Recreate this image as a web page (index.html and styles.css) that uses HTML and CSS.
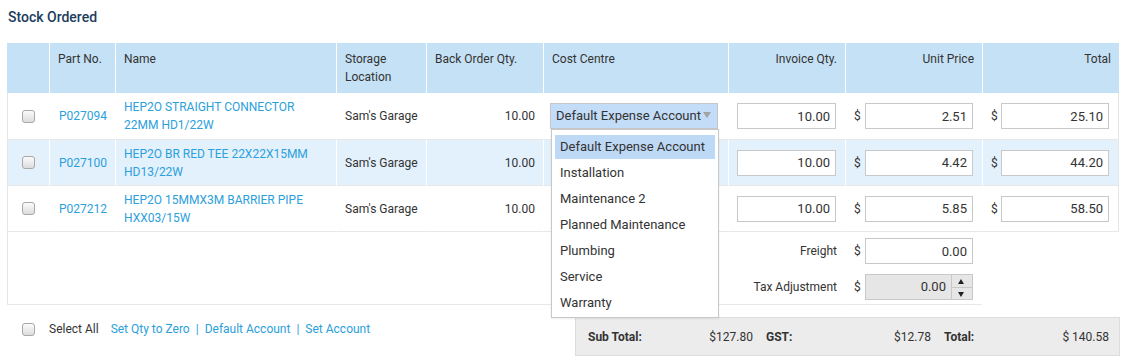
FILE: index.html
```html
<!DOCTYPE html>
<html lang="en">
<head>
    <meta charset="UTF-8">
    <meta name="viewport" content="width=device-width, initial-scale=1.0">
    <title>Stock Ordered</title>
    <link rel="stylesheet" href="styles.css">
</head>
<body>
    <div class="page">
        <h2 class="section-title">Stock Ordered</h2>

        <table class="stock-table">
            <colgroup>
                <col style="width:42px">
                <col style="width:66px">
                <col style="width:221px">
                <col style="width:90px">
                <col style="width:117px">
                <col style="width:185px">
                <col style="width:117px">
                <col style="width:137px">
                <col style="width:137px">
            </colgroup>
            <thead>
                <tr>
                    <th></th>
                    <th>Part No.</th>
                    <th>Name</th>
                    <th>Storage Location</th>
                    <th>Back Order Qty.</th>
                    <th>Cost Centre</th>
                    <th class="right">Invoice Qty.</th>
                    <th class="right">Unit Price</th>
                    <th class="right">Total</th>
                </tr>
            </thead>
            <tbody>
                <tr class="row-first">
                    <td class="check-cell"><input type="checkbox" class="check"></td>
                    <td class="part-cell"><a href="#">P027094</a></td>
                    <td class="name-cell"><a href="#">HEP2O STRAIGHT CONNECTOR 22MM HD1/22W</a></td>
                    <td>Sam's Garage</td>
                    <td class="num">10.00</td>
                    <td class="cost-cell">
                        <div class="cc-select">
                            Default Expense Account
                            <ul class="cc-list">
                                <li class="active">Default Expense Account</li>
                                <li>Installation</li>
                                <li>Maintenance 2</li>
                                <li>Planned Maintenance</li>
                                <li>Plumbing</li>
                                <li>Service</li>
                                <li>Warranty</li>
                            </ul>
                        </div>
                    </td>
                    <td class="qty-cell"><input class="num-input" type="text" value="10.00"></td>
                    <td class="money-cell"><div class="money"><span>$</span><input class="num-input" type="text" value="2.51"></div></td>
                    <td class="total-cell"><div class="money"><span>$</span><input class="num-input" type="text" value="25.10"></div></td>
                </tr>
                <tr class="alt">
                    <td class="check-cell"><input type="checkbox" class="check"></td>
                    <td class="part-cell"><a href="#">P027100</a></td>
                    <td class="name-cell"><a href="#">HEP2O BR RED TEE 22X22X15MM HD13/22W</a></td>
                    <td>Sam's Garage</td>
                    <td class="num">10.00</td>
                    <td class="cost-cell"></td>
                    <td class="qty-cell"><input class="num-input" type="text" value="10.00"></td>
                    <td class="money-cell"><div class="money"><span>$</span><input class="num-input" type="text" value="4.42"></div></td>
                    <td class="total-cell"><div class="money"><span>$</span><input class="num-input" type="text" value="44.20"></div></td>
                </tr>
                <tr>
                    <td class="check-cell"><input type="checkbox" class="check"></td>
                    <td class="part-cell"><a href="#">P027212</a></td>
                    <td class="name-cell"><a href="#">HEP2O 15MMX3M BARRIER PIPE HXX03/15W</a></td>
                    <td>Sam's Garage</td>
                    <td class="num">10.00</td>
                    <td class="cost-cell"></td>
                    <td class="qty-cell"><input class="num-input" type="text" value="10.00"></td>
                    <td class="money-cell"><div class="money"><span>$</span><input class="num-input" type="text" value="5.85"></div></td>
                    <td class="total-cell"><div class="money"><span>$</span><input class="num-input" type="text" value="58.50"></div></td>
                </tr>
                <tr class="extra-row freight-row">
                    <td colspan="7" class="extra-label">Freight</td>
                    <td class="money-cell"><div class="money"><span>$</span><input class="num-input" type="text" value="0.00"></div></td>
                    <td class="blank"></td>
                </tr>
                <tr class="extra-row tax-row">
                    <td colspan="7" class="extra-label">Tax Adjustment</td>
                    <td class="money-cell">
                        <div class="money">
                            <span>$</span>
                            <div class="spin-input">
                                <span class="spin-value">0.00</span>
                                <span class="spin">
                                    <span class="spin-up"></span>
                                    <span class="spin-down"></span>
                                </span>
                            </div>
                        </div>
                    </td>
                    <td class="blank"></td>
                </tr>
            </tbody>
        </table>

        <div class="footer">
            <div class="bulk-actions">
                <input type="checkbox" class="check">
                <span class="select-all">Select All</span>
                <a href="#">Set Qty to Zero</a>
                <span class="sep">|</span>
                <a href="#">Default Account</a>
                <span class="sep">|</span>
                <a href="#">Set Account</a>
            </div>
            <div class="totals-box">
                <div class="total-group"><b>Sub Total:</b><span>$127.80</span></div>
                <div class="total-group"><b>GST:</b><span>$12.78</span></div>
                <div class="total-group"><b>Total:</b><span>$ 140.58</span></div>
            </div>
        </div>
    </div>
</body>
</html>
```

FILE: styles.css
```css
* {
    box-sizing: border-box;
}

body {
    margin: 0;
    background: #fff;
    color: #333;
    font-family: Roboto, "Liberation Sans", Arial, sans-serif;
    font-size: 12px;
}

a {
    color: #2ba0dc;
    text-decoration: none;
}

.page {
    padding: 7px 7px 0 7px;
}

.section-title {
    margin: 0 0 16px 1px;
    font-size: 14px;
    font-weight: 500;
    line-height: 20px;
    color: #1d3d60;
}

/* table */
.stock-table {
    width: 1112px;
    border-collapse: separate;
    border-spacing: 0;
    table-layout: fixed;
}

.stock-table th {
    height: 50px;
    padding: 7px 8px 0;
    background: #c5e1f5;
    border-left: 1px solid #fff;
    font-weight: normal;
    line-height: 18px;
    text-align: left;
    vertical-align: top;
}

.stock-table th:first-child {
    border-left-color: #c5e1f5;
}

.stock-table th.right {
    text-align: right;
}

.stock-table td {
    padding: 0 8px;
    border-left: 1px solid #fff;
    border-bottom: 1px solid #e8e8e8;
    line-height: 18px;
    vertical-align: middle;
}

.stock-table td:first-child {
    border-left-color: #e5e5e5;
}

.stock-table td:last-child {
    border-right: 1px solid #e5e5e5;
}

.stock-table tbody tr {
    height: 46px;
}

.stock-table tbody tr.row-first {
    height: 47px;
}

.stock-table tr.alt td {
    background: #e3f1fd;
}

.check-cell {
    padding-left: 14px !important;
}

.part-cell {
    padding-left: 9px !important;
}

.name-cell {
    padding-right: 20px !important;
}

.num {
    text-align: right;
}

.check {
    -webkit-appearance: none;
    appearance: none;
    display: block;
    width: 13px;
    height: 13px;
    margin: 0;
    border: 1px solid #a8a8a8;
    border-radius: 3px;
    background: linear-gradient(#fbfbfb, #dcdcdc);
}

/* cost centre dropdown */
.cost-cell {
    padding: 0 9px 0 6px !important;
}

.cc-select {
    position: relative;
    width: 168px;
    height: 26px;
    padding-left: 5px;
    border: 1px solid #c6c6c6;
    background: #c3dcf8;
    font-size: 13px;
    line-height: 24px;
}

.cc-select::after {
    content: "";
    position: absolute;
    right: 6px;
    top: 8px;
    border-left: 4px solid transparent;
    border-right: 4px solid transparent;
    border-top: 6px solid #a3a3a3;
}

.cc-list {
    position: absolute;
    top: 25px;
    left: 0;
    z-index: 5;
    width: 168px;
    margin: 0;
    padding: 5px 3px 0;
    list-style: none;
    background: #fff;
    border: 1px solid #c8c8c8;
    box-shadow: 0 1px 2px rgba(0, 0, 0, 0.08);
}

.cc-list li {
    height: 24px;
    margin-bottom: 2px;
    padding-left: 5px;
    line-height: 24px;
    white-space: nowrap;
}

.cc-list li.active {
    background: #bed9f6;
}

/* inputs */
.num-input {
    display: block;
    width: 100%;
    height: 26px;
    padding: 0 5px;
    border: 1px solid #c8c8c8;
    background: #fff;
    color: #333;
    font-family: Roboto, "Liberation Sans", Arial, sans-serif;
    font-size: 13px;
    text-align: right;
}

.qty-cell {
    padding: 0 9px 0 8px !important;
}

.money-cell {
    padding: 0 9px 0 8px !important;
}

.total-cell {
    padding: 0 9px 0 8px !important;
}

.money {
    display: flex;
    align-items: center;
    justify-content: space-between;
}

.money .num-input {
    width: 108px;
}

.spin-input {
    display: flex;
    width: 108px;
    height: 26px;
    border: 1px solid #c8c8c8;
    background: #e6e6e6;
    font-size: 13px;
}

.spin-value {
    flex: 1;
    padding-right: 5px;
    line-height: 24px;
    text-align: right;
}

.spin {
    display: flex;
    flex-direction: column;
    width: 21px;
    border-left: 1px solid #c8c8c8;
}

.spin-up,
.spin-down {
    position: relative;
    flex: 1;
}

.spin-up {
    border-bottom: 1px solid #c8c8c8;
}

.spin-up::after,
.spin-down::after {
    content: "";
    position: absolute;
    left: 6px;
    top: 4px;
    border-left: 3.5px solid transparent;
    border-right: 3.5px solid transparent;
}

.spin-up::after {
    border-bottom: 5px solid #222;
}

.spin-down::after {
    top: 4px;
    border-top: 5px solid #222;
}

/* freight / tax rows */
.stock-table tr.extra-row td {
    border-bottom: none;
}

.stock-table tr.freight-row {
    height: 38px;
}

.stock-table tr.tax-row {
    height: 35px;
}

.stock-table tr.tax-row td {
    border-bottom: 1px solid #e8e8e8;
}

.extra-label {
    text-align: right;
}

.stock-table td.blank {
    border: none !important;
}

/* footer */
.footer {
    display: flex;
    align-items: flex-start;
    width: 1113px;
    margin-top: 12px;
}

.bulk-actions {
    display: flex;
    align-items: center;
    padding: 3px 0 0 15px;
    line-height: 18px;
}

.select-all {
    margin: 0 12px 0 14px;
}

.sep {
    margin: 0 6px;
    color: #2ba0dc;
}

.totals-box {
    display: flex;
    gap: 13px;
    width: 545px;
    height: 39px;
    margin-left: auto;
    padding: 0 10px 0 12px;
    align-items: center;
    background: #ececec;
    border: 1px solid #dcdcdc;
}

.total-group {
    display: flex;
    justify-content: space-between;
    flex: 1;
}

.total-group b {
    font-weight: bold;
}
```
